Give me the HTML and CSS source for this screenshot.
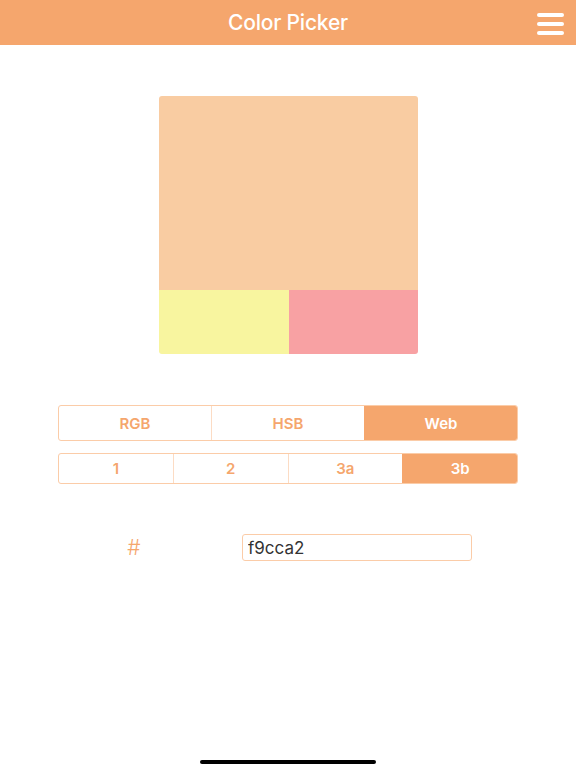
FILE: index.html
```html
<!DOCTYPE html>
<html lang="en">
<head>
    <meta charset="UTF-8">
    <meta name="viewport" content="width=device-width, initial-scale=1.0">
    <title>Color Picker</title>
    <link rel="stylesheet" href="styles.css">
</head>
<body>
    <header class="nav-bar">
        <div class="nav-title">Color Picker</div>
        <button class="menu-btn" aria-label="Menu">
            <svg width="27" height="22" viewBox="0 0 27 22">
                <rect x="0" y="0" width="27" height="4" rx="2" fill="#fff"/>
                <rect x="0" y="9" width="27" height="4" rx="2" fill="#fff"/>
                <rect x="0" y="18" width="27" height="4" rx="2" fill="#fff"/>
            </svg>
        </button>
    </header>

    <main class="content">
        <div class="swatch">
            <div class="swatch-main"></div>
            <div class="swatch-row">
                <div class="swatch-left"></div>
                <div class="swatch-right"></div>
            </div>
        </div>

        <div class="segments">
            <div class="segmented tall">
                <div class="seg">RGB</div>
                <div class="seg">HSB</div>
                <div class="seg active">Web</div>
            </div>
            <div class="segmented">
                <div class="seg">1</div>
                <div class="seg">2</div>
                <div class="seg">3a</div>
                <div class="seg active">3b</div>
            </div>
        </div>

        <div class="hex-row">
            <div class="hex-label">#</div>
            <input class="hex-input" type="text" value="f9cca2">
        </div>
    </main>

    <div class="home-bar"></div>
</body>
</html>
```

FILE: styles.css
```css
body {
    margin: 0;
    font-family: Inter, "Liberation Sans", sans-serif;
    background: #ffffff;
    min-height: 768px;
}

.nav-bar {
    height: 45px;
    background: #f5a66d;
    display: flex;
    align-items: center;
    justify-content: center;
    position: relative;
}

.nav-title {
    color: #ffffff;
    font-size: 21px;
    font-weight: 500;
    letter-spacing: -0.2px;
}

.menu-btn {
    position: absolute;
    right: 12px;
    top: 13px;
    padding: 0;
    border: none;
    background: none;
    display: flex;
}

.content {
    display: flex;
    flex-direction: column;
    align-items: center;
}

.swatch {
    margin-top: 51px;
    width: 259px;
    border-radius: 3px;
    overflow: hidden;
    display: flex;
    flex-direction: column;
}

.swatch-main {
    height: 194px;
    background: #f9cca2;
}

.swatch-row {
    display: flex;
    height: 64px;
}

.swatch-left {
    flex: 0 0 130px;
    background: #f8f59f;
}

.swatch-right {
    flex: 1;
    background: #f8a1a3;
}

.segments {
    margin-top: 51px;
    width: 460px;
    display: flex;
    flex-direction: column;
    gap: 12px;
}

.segmented {
    display: flex;
    height: 31px;
    border: 1px solid #fbcca8;
    border-radius: 3px;
    overflow: hidden;
    box-sizing: border-box;
}

.segmented.tall {
    height: 36px;
}

.seg {
    flex: 1;
    display: flex;
    align-items: center;
    justify-content: center;
    color: #f5a66d;
    font-size: 15px;
    font-weight: 600;
    border-left: 1px solid #fcdcc4;
}

.seg:first-child {
    border-left: none;
}

.seg.active {
    background: #f5a66d;
    color: #ffffff;
    border-left-color: #f5a66d;
}

.hex-row {
    margin-top: 50px;
    width: 460px;
    display: flex;
    align-items: center;
}

.hex-label {
    width: 152px;
    text-align: center;
    color: #f5a66d;
    font-size: 21px;
    font-weight: 300;
}

.hex-input {
    margin-left: 32px;
    width: 230px;
    height: 27px;
    box-sizing: border-box;
    border: 1px solid #fbcca8;
    border-radius: 3px;
    padding: 0 5px;
    font-family: Inter, "Liberation Sans", sans-serif;
    font-size: 17px;
    color: #333333;
    outline: none;
}

.home-bar {
    position: fixed;
    left: 200px;
    bottom: 4px;
    width: 176px;
    height: 4px;
    border-radius: 2px;
    background: #000000;
}
```
